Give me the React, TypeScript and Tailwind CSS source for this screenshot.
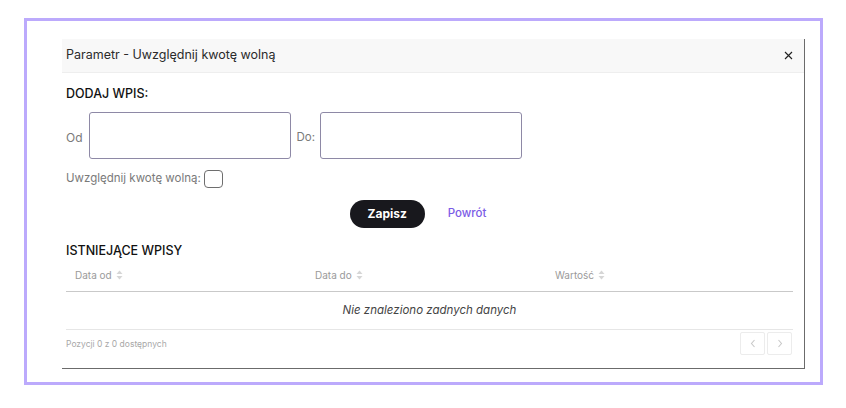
import React from "react";

function SortIcon() {
  return (
    <svg width="7" height="10" viewBox="0 0 7 10" className="ml-[4px] inline-block">
      <path d="M3.5 0.5 L6.5 4 L0.5 4 Z" fill="#d6d6d6" />
      <path d="M3.5 9.5 L6.5 6 L0.5 6 Z" fill="#d6d6d6" />
    </svg>
  );
}

function PageButton({ dir }: { dir: "prev" | "next" }) {
  return (
    <button className="w-[25px] h-[23px] border border-[#ececec] rounded-[2px] flex items-center justify-center bg-white">
      <svg width="6" height="9" viewBox="0 0 6 9">
        <path
          d={dir === "prev" ? "M4.5 1 L1.5 4.5 L4.5 8" : "M1.5 1 L4.5 4.5 L1.5 8"}
          fill="none"
          stroke="#c8c8c8"
          strokeWidth="1.1"
        />
      </svg>
    </button>
  );
}

function ParamModal() {
  const columns = ["Data od", "Data do", "Wartość"];
  return (
    <div className="w-[743px] h-[330px] border-r border-b border-[#6b6b6b] bg-white flex flex-col">
      <div className="h-[34px] bg-[#f8f8f8] border-b border-[#eeeeee] flex items-center justify-between pl-[4px] pr-[10px]">
        <span className="text-[12.5px] text-[#2b2b2b]">Parametr - Uwzględnij kwotę wolną</span>
        <button className="w-[9px] h-[9px] mr-[1px]">
          <svg width="9" height="9" viewBox="0 0 9 9">
            <path d="M1 1 L8 8 M8 1 L1 8" stroke="#222" strokeWidth="1.15" />
          </svg>
        </button>
      </div>

      <div className="pl-[4px] pr-[11px] flex flex-col">
        <h3 className="mt-[13px] text-[12.5px] leading-[16px] font-medium text-[#111] uppercase">Dodaj wpis:</h3>

        <div className="mt-[10px] flex items-center">
          <label className="mt-[5px] text-[12px] text-[#7a7a7a]">Od</label>
          <input className="ml-[6px] w-[202px] h-[47px] border border-[#8e89a6] rounded-[3px] outline-none" />
          <label className="ml-[6px] mt-[5px] text-[11.5px] text-[#7a7a7a]">Do:</label>
          <input className="ml-[5px] w-[202px] h-[47px] border border-[#8e89a6] rounded-[3px] outline-none" />
        </div>

        <div className="mt-[11px] h-[18px] flex items-center">
          <span className="text-[11.5px] text-[#7a7a7a]">Uwzględnij kwotę wolną:</span>
          <span className="ml-[3px] w-[19px] h-[18px] border border-[#6e6e6e] rounded-[4px] bg-white" />
        </div>

        <div className="mt-[12px] flex items-center justify-center">
          <button className="w-[75px] h-[28px] rounded-full bg-[#18181d] text-white text-[12px] font-bold">
            Zapisz
          </button>
          <a className="px-[23px] text-[11.5px] text-[#7b5ce6] font-medium">Powrót</a>
        </div>

        <h3 className="mt-[15px] text-[12.5px] leading-[16px] font-medium text-[#111] uppercase">Istniejące wpisy</h3>

        <div className="h-[33px] grid grid-cols-[240px_240px_1fr] items-center border-b border-[#c9c9c9]">
          {columns.map((c) => (
            <div key={c} className="pl-[9px] text-[10px] text-[#9a9a9a] flex items-center">
              {c}
              <SortIcon />
            </div>
          ))}
        </div>
        <div className="h-[38px] flex items-center justify-center border-b border-[#e6e6e6]">
          <span className="text-[11.5px] italic text-[#444]">Nie znaleziono zadnych danych</span>
        </div>

        <div className="pt-[2px] flex items-start justify-between">
          <span className="mt-[6px] text-[8.5px] text-[#a8a8a8]">Pozycji 0 z 0 dostępnych</span>
          <div className="flex gap-[2px] mr-[1px]">
            <PageButton dir="prev" />
            <PageButton dir="next" />
          </div>
        </div>
      </div>
    </div>
  );
}

export default function App() {
  return (
    <div className="w-[846px] h-[408px] bg-white pt-[18px] pl-[24px]" style={{ fontFamily: "Inter, 'Noto Sans', sans-serif" }}>
      <div className="w-[799px] h-[367px] border-[3px] border-[#bcaafc] pl-[35px] pt-[18px]">
        <ParamModal />
      </div>
    </div>
  );
}
